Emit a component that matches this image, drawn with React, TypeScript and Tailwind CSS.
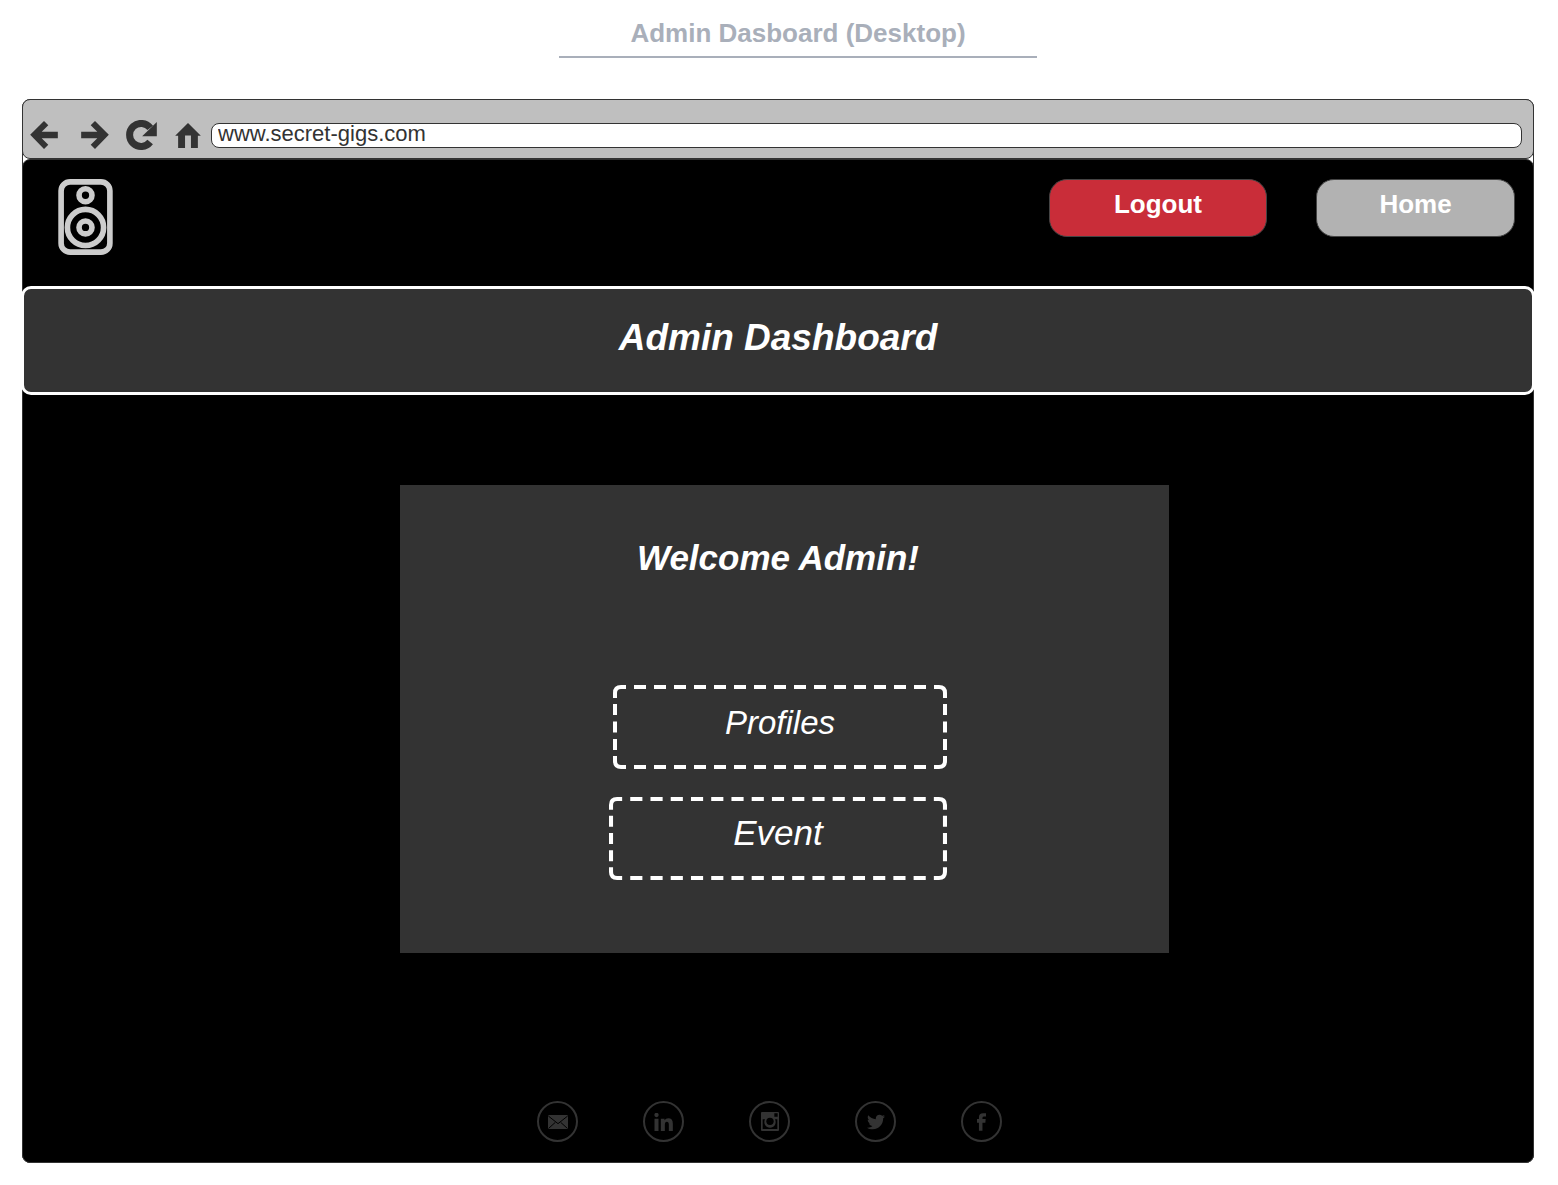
import type { ReactNode } from "react";
import { FaTwitter } from "react-icons/fa";

function BackIcon() {
  return (
    <svg viewBox="0 0 84 85" className="size-7" fill="#333" aria-hidden="true">
      <path d="M0 42 42 0l13 13-20 20h49v19H35l20 20-13 13z" />
    </svg>
  );
}

function ForwardIcon() {
  return (
    <svg viewBox="0 0 84 85" className="size-7" fill="#333" aria-hidden="true">
      <path d="M84 42 42 0 29 13l20 20H0v19h49L29 72l13 13z" />
    </svg>
  );
}

function ReloadIcon() {
  return (
    <svg viewBox="0 0 92 90" className="h-[30px] w-[31px]" aria-hidden="true">
      <path d="M72 66A34.500 34.500 0 1 1 72.200 23.800" fill="none" stroke="#333" strokeWidth="21" />
      <path d="M92 6v43H48z" fill="#333" />
    </svg>
  );
}

function HomeIcon() {
  return (
    <svg viewBox="0 0 78 76" className="h-[25px] w-[26px]" fill="#333" aria-hidden="true">
      <path d="M39 0 78 39H69v37H48V38H30v38H9V39H0z" />
    </svg>
  );
}

function SpeakerLogo() {
  return (
    <svg viewBox="0 0 164 229" className="h-[76px] w-[55px]" fill="none" stroke="#ccc" strokeWidth="17" role="img" aria-label="Secret Gigs">
      <rect x="8.500" y="8.500" width="147" height="212" rx="27" />
      <circle cx="82" cy="49" r="19.500" />
      <circle cx="82" cy="146" r="54.500" />
      <circle cx="82" cy="146" r="19.500" />
    </svg>
  );
}

function MailIcon() {
  return (
    <svg viewBox="0 0 60 42" className="h-3.5 w-5" aria-hidden="true">
      <rect width="60" height="42" rx="3" fill="#333" />
      <path d="M1 3 30 26 59 3M2 40l20-18M58 40 38 22" fill="none" stroke="#000" strokeWidth="3" />
    </svg>
  );
}

function LinkedInIcon() {
  return (
    <svg viewBox="0 0 56 54" className="h-[18px] w-[19px]" fill="#333" aria-hidden="true">
      <circle cx="7" cy="6" r="6.500" />
      <path d="M1 17h12v37H1zM20 17h11v5q4-6 11-6 14 0 14 16v22H44V35q0-9-6-9-6 0-6 9v19H20z" />
    </svg>
  );
}

function FacebookIcon() {
  return (
    <svg viewBox="0 0 28 54" className="h-[18px] w-[9px]" fill="#333" aria-hidden="true">
      <path d="M6 54V29H0V18h6v-5Q6 0 19 0h9v10h-6q-5 0-5 4v4h10l-1 11h-9v25z" />
    </svg>
  );
}

function CameraIcon() {
  return (
    <svg viewBox="0 0 54 57" className="h-[19px] w-[18px]" aria-hidden="true">
      <path
        fillRule="evenodd"
        fill="#333"
        d="M3 0h48q3 0 3 3v51q0 3-3 3H3q-3 0-3-3V3q0-3 3-3zM5 22v29h44V22h-7a17 17 0 1 1-30 0zM40 4v10h10V4z"
      />
      <circle cx="27" cy="28" r="11" fill="#000" />
    </svg>
  );
}

/* Dashed outline whose corners are always solid. */
function DashedOutline() {
  return (
    <svg
      viewBox="0 0 334 84"
      preserveAspectRatio="none"
      className="pointer-events-none absolute inset-0 size-full"
      fill="none"
      stroke="#fff"
      strokeWidth="4"
      aria-hidden="true"
    >
      <path d="M13 2H8Q2 2 2 8v5M321 2h5q6 0 6 6v5M13 82H8q-6 0-6-6v-5M321 82h5q6 0 6-6v-5" />
      <path d="M21 2H313M21 82H313" strokeDasharray="12 8" />
      <path d="M2 19V65M332 19V65" strokeDasharray="11 6.500" />
    </svg>
  );
}

function PanelButton({ className, children }: { className: string; children: ReactNode }) {
  return (
    <button type="button" className={`relative max-w-full italic text-white ${className}`}>
      <DashedOutline />
      {children}
    </button>
  );
}

const socials = [
  { label: "Email", icon: <MailIcon /> },
  { label: "LinkedIn", icon: <LinkedInIcon /> },
  { label: "Instagram", icon: <CameraIcon /> },
  { label: "Twitter", icon: <FaTwitter size={18} /> },
  { label: "Facebook", icon: <FacebookIcon /> },
];

export default function App() {
  return (
    <div className="min-h-screen bg-white pr-6 pb-[22px] pl-[22px] font-['Liberation_Sans',Arial,sans-serif]">
      <div className="flex h-[99px] justify-center pl-10">
        <h2 className="h-[58px] w-[478px] border-b-2 border-[#a9afba] pt-[18px] text-center text-[26px] leading-[30px] font-bold text-[#a9afba]">
          Admin Dasboard (Desktop)
        </h2>
      </div>

      <div className="rounded-lg border border-[#333] bg-white">
        <nav className="-mx-px -mt-px flex h-[60px] items-center rounded-lg border border-[#333] bg-[#bfbfbf] pt-3 pr-[11px] pl-[7px]">
          <button type="button" aria-label="Back" className="mr-[23px]">
            <BackIcon />
          </button>
          <button type="button" aria-label="Forward" className="mr-[17px]">
            <ForwardIcon />
          </button>
          <button type="button" aria-label="Reload" className="mr-[18px]">
            <ReloadIcon />
          </button>
          <button type="button" aria-label="Browser home" className="mr-2.5">
            <HomeIcon />
          </button>
          <input
            type="text"
            aria-label="Address"
            defaultValue="www.secret-gigs.com"
            className="h-[25px] min-w-0 flex-1 rounded-lg border border-[#333] bg-white px-1.5 pb-0.5 text-[22px] leading-5 text-[#333]"
          />
        </nav>

        <div className="-mx-px -mb-px rounded-lg border border-[#333] bg-black">
          <header className="flex h-[126px] items-start justify-between pt-[19px] pr-[18px] pl-[35px]">
            <SpeakerLogo />
            <div className="flex gap-[49px] text-[26px] font-bold text-white">
              <button type="button" className="h-[58px] w-[218px] rounded-[18px] border border-[#444] bg-[#c92d39] pb-[7px]">
                Logout
              </button>
              <button type="button" className="h-[58px] w-[199px] rounded-[18px] border border-[#444] bg-[#b2b2b2] pb-[7px]">
                Home
              </button>
            </div>
          </header>

          <h1 className="-mx-0.5 flex h-[109px] items-center justify-center rounded-[10px] border-3 border-white bg-[#333] pb-1.5 text-[37px] font-bold text-white italic">
            Admin Dashboard
          </h1>

          <main className="flex justify-center pt-[90px] pl-[13px]">
            <section className="flex h-[468px] w-[769px] flex-col items-center bg-[#333] pt-[53px] pr-[13px]">
              <h2 className="text-[35px] leading-10 font-bold text-white italic">Welcome Admin!</h2>
              <div className="mt-[107px] flex flex-col items-end gap-7">
                <PanelButton className="h-[84px] w-[334px] pb-2 text-[33px]">Profiles</PanelButton>
                <PanelButton className="h-[83px] w-[338px] pb-2.5 text-[35px]">Event</PanelButton>
              </div>
            </section>
          </main>

          <footer className="flex justify-center gap-[65px] pt-[148px] pr-[17px] pb-5 text-[#333]">
            {socials.map((social) => (
              <a
                key={social.label}
                href="#"
                aria-label={social.label}
                className="flex size-[41px] items-center justify-center rounded-full border-2 border-[#333]"
              >
                {social.icon}
              </a>
            ))}
          </footer>
        </div>
      </div>
    </div>
  );
}
